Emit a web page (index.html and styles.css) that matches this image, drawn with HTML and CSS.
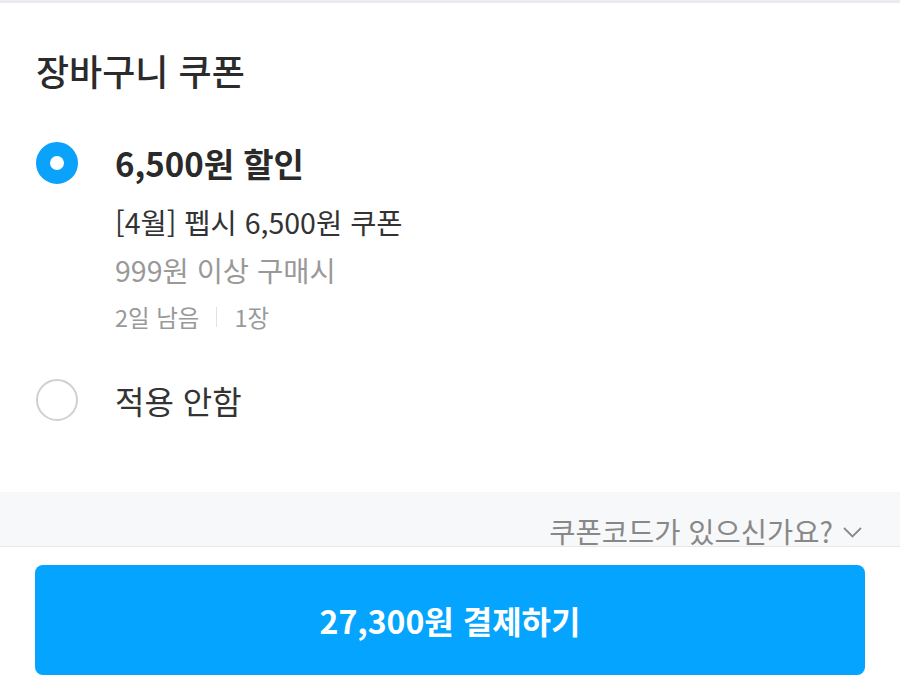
FILE: index.html
```html
<!DOCTYPE html>
<html lang="ko">
<head>
<meta charset="UTF-8">
<title>장바구니 쿠폰</title>
<link rel="stylesheet" href="styles.css">
</head>
<body>
    <div class="top-line"></div>
    <div class="sheet">
        <h1>장바구니 쿠폰</h1>

        <ul class="coupon-list">
            <li class="coupon">
                <span class="radio checked"></span>
                <div class="coupon-info">
                    <div class="coupon-title bold">6,500원 할인</div>
                    <div class="coupon-name">[4월] 펩시 6,500원 쿠폰</div>
                    <div class="coupon-cond">999원 이상 구매시</div>
                    <div class="coupon-meta">
                        <span>2일 남음</span>
                        <span class="sep"></span>
                        <span>1장</span>
                    </div>
                </div>
            </li>
            <li class="coupon">
                <span class="radio"></span>
                <div class="coupon-info">
                    <div class="coupon-title">적용 안함</div>
                </div>
            </li>
        </ul>
    </div>

    <div class="code-bar">
        <span>쿠폰코드가 있으신가요?</span>
        <svg class="chevron" width="19" height="11" viewBox="0 0 19 11">
            <path d="M1 1 L9.5 9.5 L18 1" fill="none" stroke="#8a8a8a" stroke-width="1.8"/>
        </svg>
    </div>

    <div class="footer">
        <button type="button" class="pay-btn">27,300원 결제하기</button>
    </div>
</body>
</html>
```

FILE: styles.css
```css
body {
    margin: 0;
    background: #fff;
    font-family: "Noto Sans CJK KR", "Noto Sans", sans-serif;
    color: #333;
}

.top-line {
    height: 3px;
    background: #e9ebf0;
}

.sheet {
    padding: 0 36px;
}

h1 {
    margin: 0;
    padding-top: 43px;
    font-size: 36px;
    font-weight: 500;
    line-height: 48px;
    color: #2b2b2b;
}

.coupon-list {
    list-style: none;
    margin: 0;
    padding: 0;
}

.coupon {
    display: flex;
    align-items: flex-start;
    gap: 37px;
}

.coupon:first-child {
    margin-top: 46px;
}

.coupon:last-child {
    margin-top: 44px;
}

.radio {
    box-sizing: border-box;
    width: 42px;
    height: 42px;
    border-radius: 50%;
    border: 2px solid #d0d0d0;
    background: #fff;
    flex-shrink: 0;
    margin-top: 2px;
}

.radio.checked {
    border: 14px solid #0aa2fa;
}

.coupon-title {
    font-size: 32px;
    line-height: 46px;
    color: #333;
}

.coupon-title.bold {
    font-size: 33px;
    font-weight: 700;
    color: #2a2a2a;
}

.coupon-name {
    margin-top: 16px;
    font-size: 28.5px;
    line-height: 40px;
    color: #333;
}

.coupon-cond {
    margin-top: 8px;
    font-size: 28.5px;
    line-height: 40px;
    color: #999;
}

.coupon-meta {
    margin-top: 11px;
    display: flex;
    align-items: center;
    gap: 17px;
    font-size: 23.5px;
    line-height: 32px;
    color: #999;
}

.sep {
    width: 1px;
    height: 20px;
    background: #e2e2e2;
}

.code-bar {
    box-sizing: border-box;
    margin-top: 69px;
    height: 55px;
    overflow: hidden;
    background: #f7f8fa;
    border-bottom: 1px solid #e6e8eb;
    display: flex;
    justify-content: flex-end;
    align-items: flex-start;
    gap: 10px;
    padding: 22px 38px 0 0;
    font-size: 28.5px;
    color: #888;
    line-height: 34px;
}

.chevron {
    margin-top: 13px;
}

.footer {
    padding: 18px 35px;
}

.pay-btn {
    width: 100%;
    height: 110px;
    border: none;
    border-radius: 8px;
    background: #04a4ff;
    color: #fff;
    font-family: "Noto Sans CJK KR", "Noto Sans", sans-serif;
    font-size: 32px;
    font-weight: 700;
}
```
